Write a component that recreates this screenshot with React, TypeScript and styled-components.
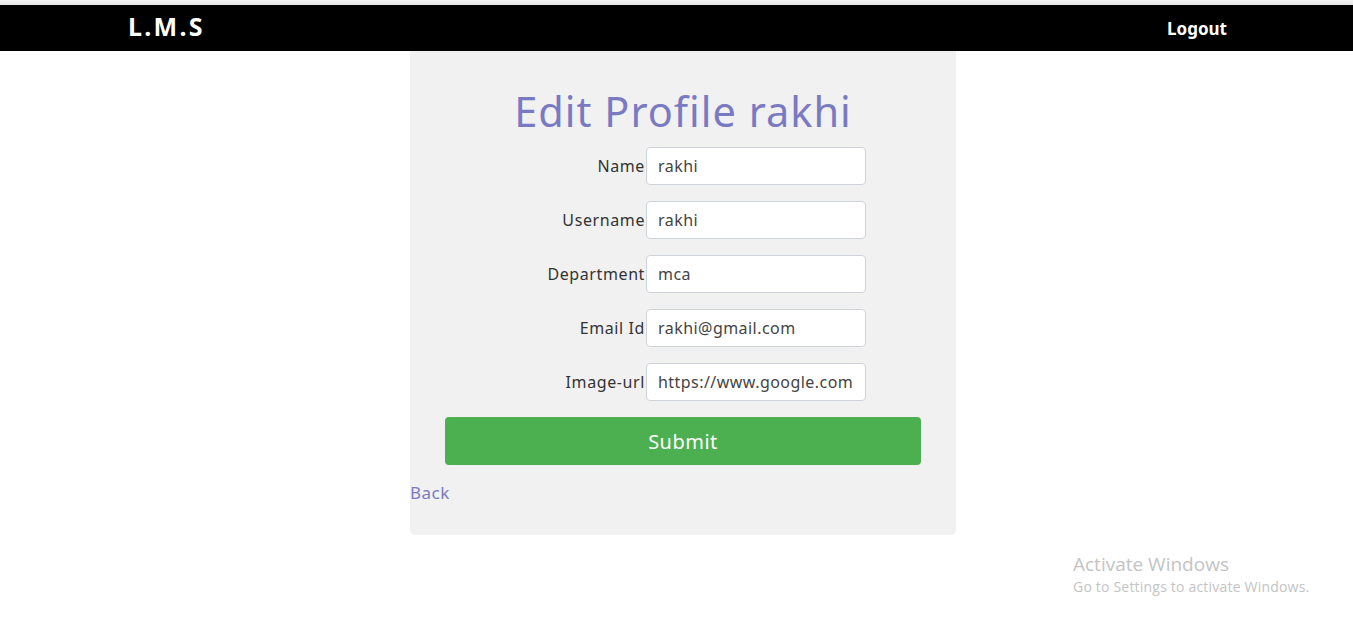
import React from "react";
import styled, { createGlobalStyle } from "styled-components";

const Global = createGlobalStyle`
  html, body { margin: 0; padding: 0; background: #fff; }
  body { font-family: "Noto Sans", sans-serif; }
  * { box-sizing: border-box; }
`;

const Page = styled.div`
  padding-top: 5px;
  position: relative;
  height: 621px;
  background: #fff;
`;

const TopLine = styled.div`
  position: absolute;
  top: 0; left: 0; right: 0;
  height: 5px;
  background: linear-gradient(#f4f4f4, #e6e6e6);
`;

const Nav = styled.nav`
  height: 46px;
  background: #000;
  display: flex;
  align-items: center;
  justify-content: space-between;
  padding: 0 126px 0 128px;
`;

const Brand = styled.div`
  color: #fff;
  font-family: "Noto Sans", sans-serif;
  font-weight: 700;
  font-size: 25px;
  letter-spacing: 2.3px;
  margin-top: -4px;
`;

const Logout = styled.a`
  color: #fff;
  font-family: "Noto Sans", sans-serif;
  font-weight: 700;
  font-size: 17px;
  letter-spacing: 0;
`;

const Card = styled.div`
  width: 546px;
  margin: 0 auto 0 410px;
  background: #f1f1f1;
  border-radius: 0 0 5px 5px;
  padding: 34px 0 31px;
  display: flex;
  flex-direction: column;
`;

const Title = styled.h1`
  margin: 0 0 10px;
  text-align: center;
  font-weight: 400;
  font-size: 41.5px;
  line-height: 52px;
  color: #7a7ac2;
  letter-spacing: 1px;
`;

const Form = styled.form`
  display: grid;
  grid-template-columns: 200px 220px;
  column-gap: 1px;
  row-gap: 16px;
  align-items: center;
  margin-left: 35px;
`;

const Label = styled.label`
  text-align: right;
  font-size: 16px;
  color: #333;
  letter-spacing: 0.6px;
`;

const Input = styled.input`
  height: 38px;
  width: 220px;
  border: 1px solid #cfd4da;
  border-radius: 4px;
  background: #fff;
  padding: 0 4px 0 11px;
  font-family: "Noto Sans", sans-serif;
  font-size: 16px;
  letter-spacing: 0.45px;
  color: #444;
  outline: none;
`;

const Submit = styled.button`
  margin: 16px 0 0 35px;
  width: 476px;
  height: 48px;
  background: #4caf50;
  border: none;
  border-radius: 4px;
  color: #fff;
  font-family: "Noto Sans", sans-serif;
  font-size: 20px;
  letter-spacing: 0.5px;
`;

const Back = styled.a`
  margin-top: 17px;
  color: #7a7ac2;
  font-size: 17px;
  line-height: 22px;
  letter-spacing: 0.5px;
  align-self: flex-start;
`;

const Watermark = styled.div`
  position: absolute;
  left: 1073px;
  top: 552px;
  font-family: "Open Sans", sans-serif;
  color: #c4c4c4;
`;

const WmTitle = styled.div`
  font-size: 19px;
  line-height: 24px;
`;

const WmSub = styled.div`
  font-size: 14px;
  line-height: 20px;
  margin-top: 1px;
  letter-spacing: 0.2px;
`;

const fields = [
  ["Name", "rakhi"],
  ["Username", "rakhi"],
  ["Department", "mca"],
  ["Email Id", "rakhi@gmail.com"],
  ["Image-url", "https://www.google.com"],
];

export default function App() {
  return (
    <Page>
      <Global />
      <TopLine />
      <Nav>
        <Brand>L.M.S</Brand>
        <Logout>Logout</Logout>
      </Nav>
      <Card>
        <Title>Edit Profile rakhi</Title>
        <Form onSubmit={(e) => e.preventDefault()}>
          {fields.map(([l, v]) => (
            <React.Fragment key={l}>
              <Label>{l}</Label>
              <Input defaultValue={v} />
            </React.Fragment>
          ))}
        </Form>
        <Submit>Submit</Submit>
        <Back>Back</Back>
      </Card>
      <Watermark>
        <WmTitle>Activate Windows</WmTitle>
        <WmSub>Go to Settings to activate Windows.</WmSub>
      </Watermark>
    </Page>
  );
}
